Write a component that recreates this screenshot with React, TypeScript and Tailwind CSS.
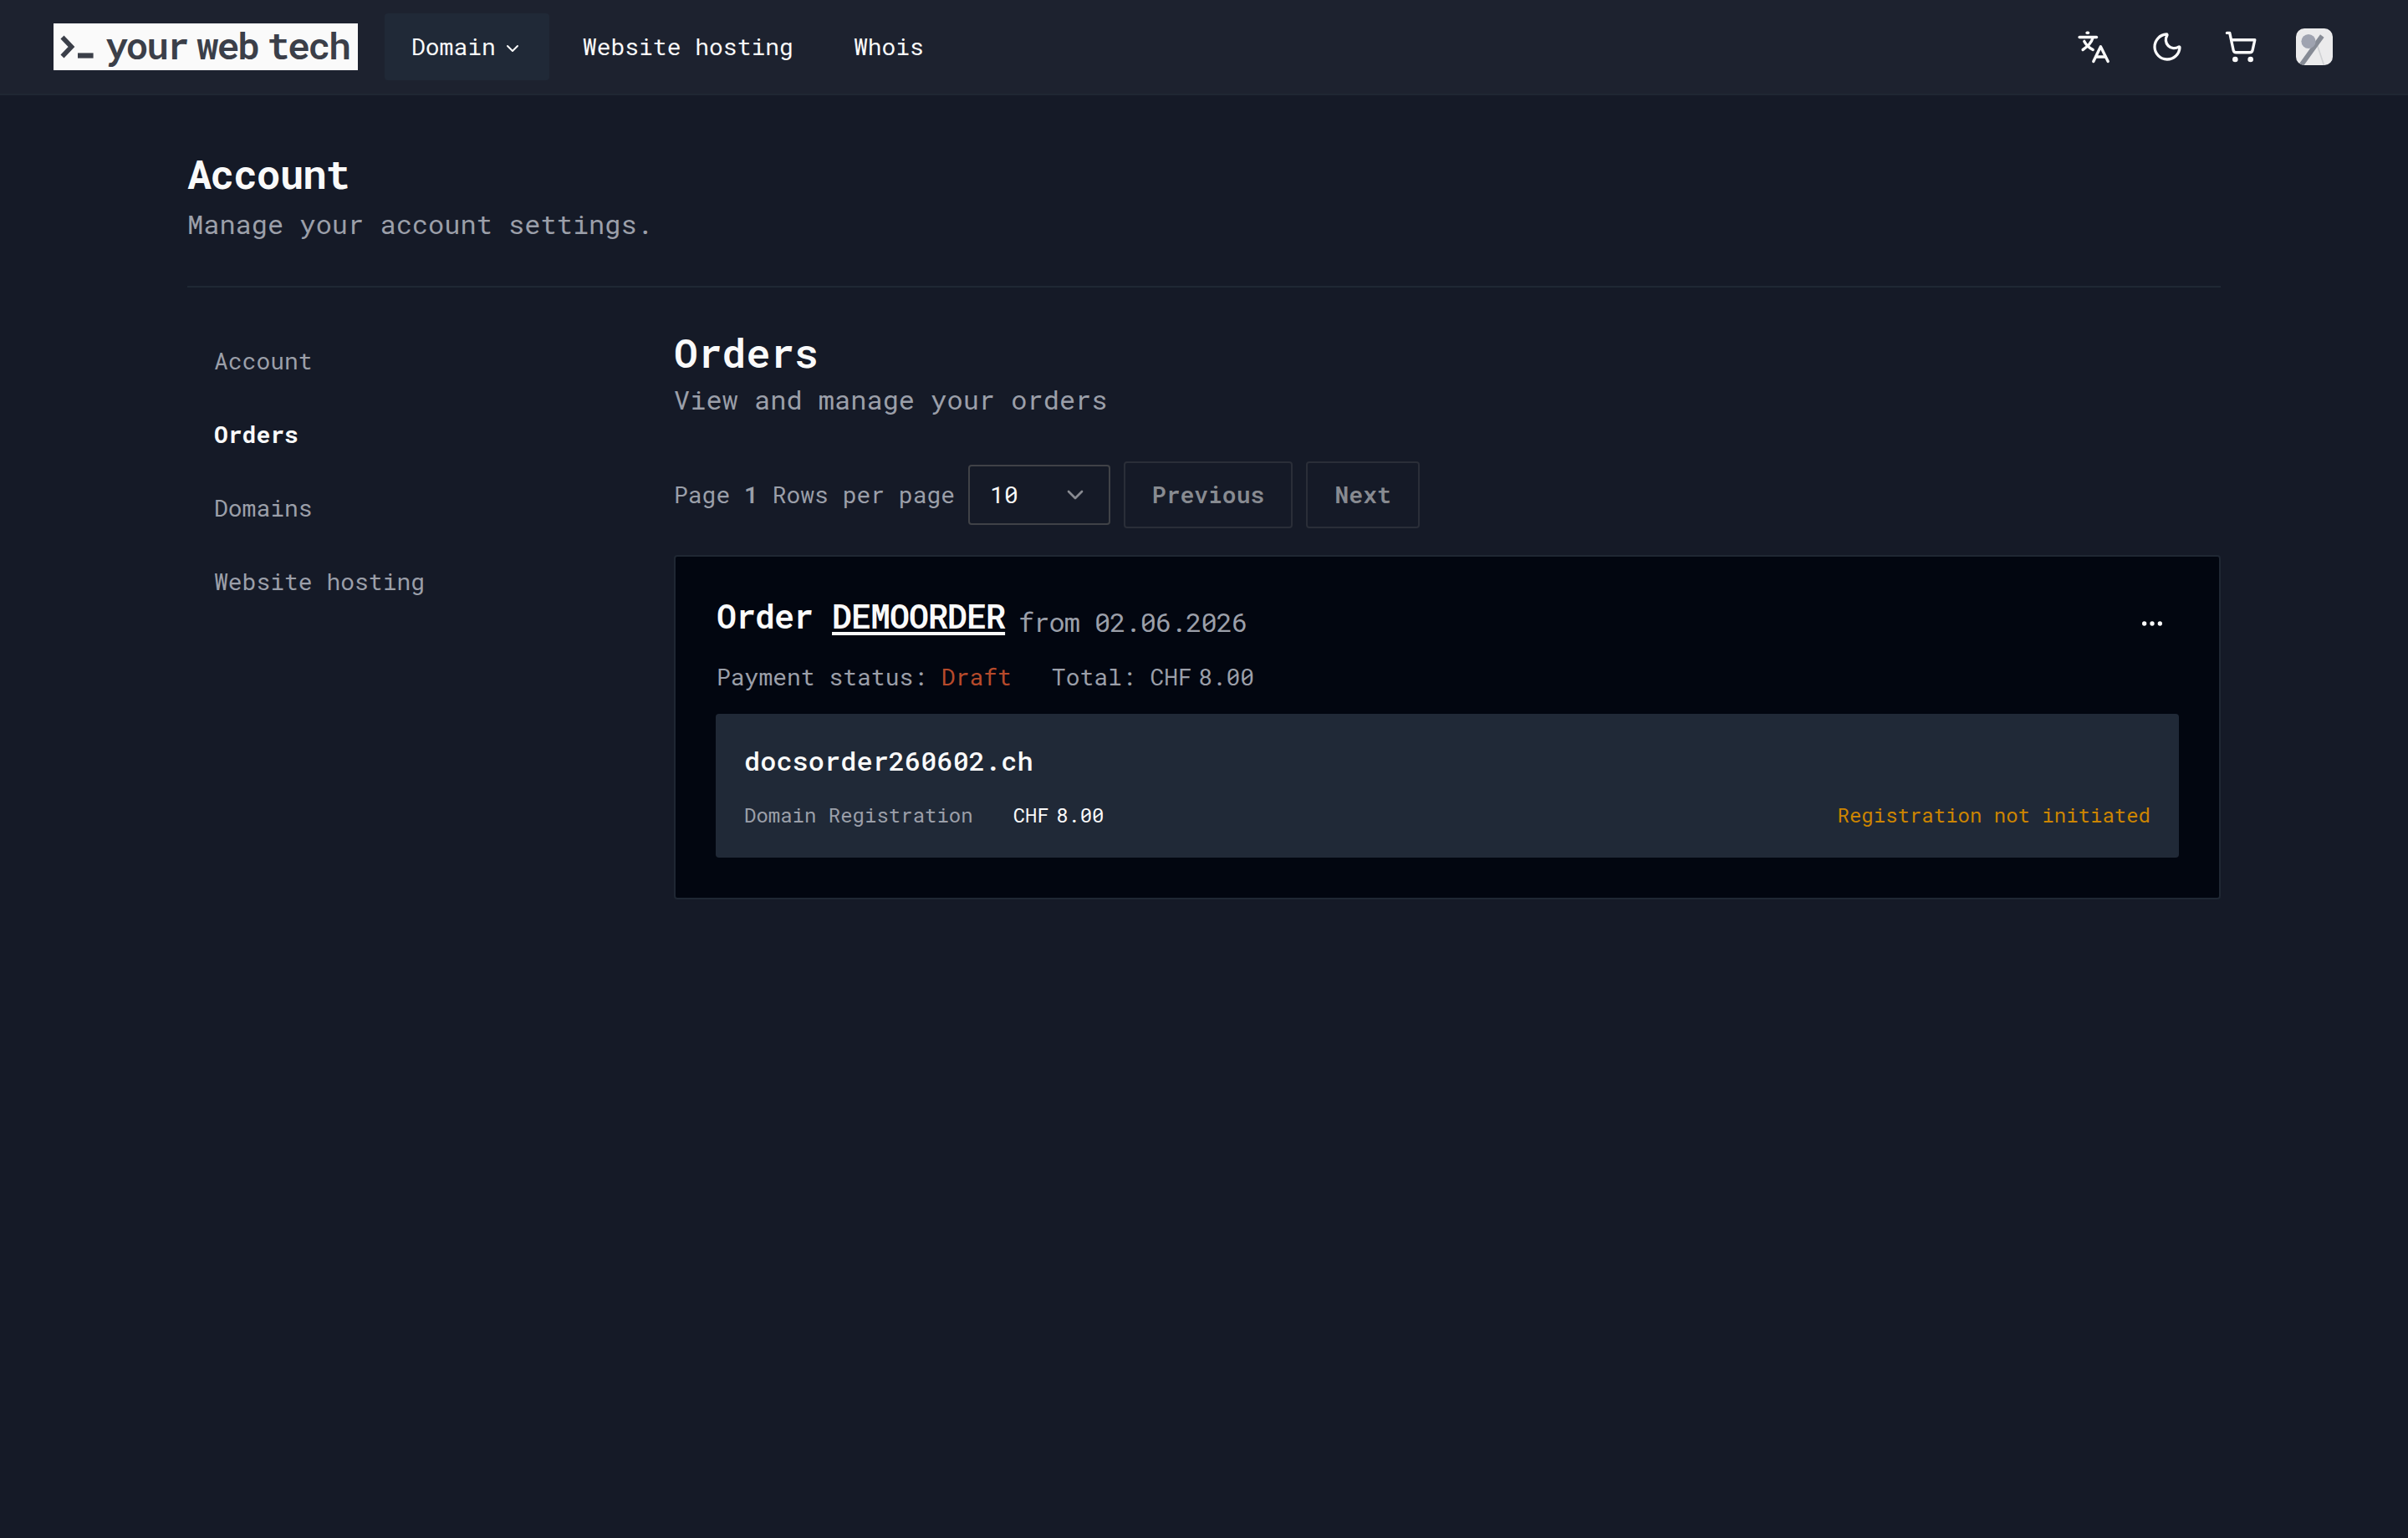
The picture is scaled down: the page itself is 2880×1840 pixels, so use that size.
import { ChevronDown, Ellipsis, Moon, ShoppingCart } from "lucide-react";

const sidebarItems = [
  { label: "Account", active: false },
  { label: "Orders", active: true },
  { label: "Domains", active: false },
  { label: "Website hosting", active: false },
];

function Logo() {
  return (
    <div className="flex h-14 w-[364px] items-center bg-[#fafafa] pl-2 text-[#3b3f49]">
      <svg viewBox="0 0 42 32" className="h-8 w-[42px]" fill="none" stroke="currentColor">
        <path d="M2.5 4.5 L13.5 16 L2.5 27.5" strokeWidth="5.6" />
        <path d="M21 26.5 H39.6" strokeWidth="6.2" />
      </svg>
      <div className="ml-3 flex gap-[11px] pb-[5px] text-[45px] leading-[51px] font-semibold tracking-[-2.5px]">
        <span>your</span>
        <span>web</span>
        <span>tech</span>
      </div>
    </div>
  );
}

function TranslateIcon() {
  return (
    <svg
      viewBox="0 0 40 40"
      className="size-10"
      fill="none"
      stroke="currentColor"
      strokeWidth="3.4"
      strokeLinecap="round"
      strokeLinejoin="round"
    >
      <path d="M12.1 3.2h1.4" />
      <path d="M3.1 8.5h20.4" />
      <path d="M19.2 8.9c-1.6 5.6-6.3 10.8-12.1 14.6" />
      <path d="M8.8 13.4c2.2 4.3 6.2 7.9 10.4 10.1" />
      <path d="M19.8 37.6 28.4 19.8 37.2 37.6" />
      <path d="M23 32h11" />
    </svg>
  );
}

function Avatar() {
  return (
    <div className="size-11 overflow-hidden rounded-[10px] bg-[#ebebec]">
      <svg viewBox="0 0 44 44" className="size-11">
        <path d="M25.5 20 L33.5 44" stroke="#d0d1d4" strokeWidth="1.6" />
        <path d="M31.3 9 L6.5 43.5" stroke="#868b95" strokeWidth="5.6" />
        <circle cx="15" cy="15.5" r="8.6" fill="#9fa3b0" />
      </svg>
    </div>
  );
}

function Header() {
  return (
    <header className="flex h-[114px] items-start justify-between border-b-2 border-[#1f2733] bg-[#1d222f] pt-4 pr-[90px] pl-16">
      <div className="flex h-20 items-center">
        <Logo />
        <nav className="ml-8 flex gap-2 font-[450]">
          <div className="flex h-20 items-center rounded bg-[#202937] px-8">
            Domain
            <ChevronDown className="relative top-0.5 ml-2 size-6" />
          </div>
          <div className="flex h-20 items-center px-8">Website hosting</div>
          <div className="flex h-20 items-center px-8">Whois</div>
        </nav>
      </div>
      <div className="flex h-20 items-center gap-12">
        <TranslateIcon />
        <Moon className="size-10" />
        <ShoppingCart className="size-10" />
        <div className="-ml-0.5">
          <Avatar />
        </div>
      </div>
    </header>
  );
}

function Pager() {
  return (
    <div className="mt-[50px] flex h-20 items-center gap-4">
      <p className="text-[#9b9fa9]">
        Page <span className="font-semibold">1</span> Rows per page
      </p>
      <div className="flex h-[72px] w-[170px] items-center justify-between rounded border-2 border-[#404247] px-6">
        10
        <ChevronDown className="size-8 opacity-50" />
      </div>
      <div className="flex h-20 w-[202px] items-center justify-center rounded border-2 border-[#2a2e38] font-semibold text-[#888b91]">
        Previous
      </div>
      <div className="flex h-20 w-[136px] items-center justify-center rounded border-2 border-[#2a2e38] font-semibold text-[#888b91]">
        Next
      </div>
    </div>
  );
}

function OrderCard() {
  return (
    <div className="mt-8 rounded border-2 border-[#1f2733] bg-[#020610] p-12">
      <div className="flex h-16 items-start justify-between">
        <div className="flex items-start gap-4 pl-px tracking-[-1px]">
          <h3 className="text-[40px] leading-[46px] font-semibold">
            Order{" "}
            <span className="underline decoration-4 underline-offset-[4px] [text-decoration-skip-ink:none]">
              DEMOORDER
            </span>
          </h3>
          <span className="text-[32px] leading-[60px] text-[#9b9fa9]">from 02.06.2026</span>
        </div>
        <div className="flex h-16 items-center pr-4">
          <Ellipsis className="size-8" />
        </div>
      </div>
      <div className="mt-3 flex gap-12 pl-px leading-10 text-[#9b9fa9]">
        <p>
          Payment status: <span className="text-[#b64a2b]">Draft</span>
        </p>
        <p>
          Total: CHF<span className="ml-[7px]">8.00</span>
        </p>
      </div>
      <div className="mt-6 rounded bg-[#202937] p-[34px]">
        <h4 className="text-[32px] leading-[44px] font-[550]">docsorder260602.ch</h4>
        <div className="mt-[26px] flex items-center justify-between text-2xl leading-[34px]">
          <div className="flex gap-12">
            <span className="text-[#9b9fa9]">Domain Registration</span>
            <span>
              CHF<span className="ml-2">8.00</span>
            </span>
          </div>
          <span className="text-[#cd8500]">Registration not initiated</span>
        </div>
      </div>
    </div>
  );
}

export default function App() {
  return (
    <div className="min-h-[1840px] w-[2880px] bg-[#151a27] font-['Roboto_Mono','Liberation_Mono',monospace] text-[28px] leading-10 whitespace-nowrap text-[#fafafa]">
      <Header />
      <main className="px-56 pt-[62px]">
        <h1 className="text-5xl leading-[64px] font-bold tracking-tight">Account</h1>
        <p className="mt-1 text-[32px] leading-[48px] text-[#9b9fa9]">Manage your account settings.</p>
        <div className="mt-[50px] h-0.5 bg-[#1f2834]" />
        <div className="mt-12 flex">
          <aside className="flex w-[582px] flex-col gap-2">
            {sidebarItems.map((item) => (
              <div
                key={item.label}
                className={
                  item.active
                    ? "flex h-20 items-center px-8 font-bold"
                    : "flex h-20 items-center px-8 text-[#9b9fa9]"
                }
              >
                {item.label}
              </div>
            ))}
          </aside>
          <section className="grow">
            <h2 className="text-5xl leading-[60px] font-semibold">Orders</h2>
            <p className="mt-0.5 text-[32px] leading-[48px] text-[#9b9fa9]">View and manage your orders</p>
            <Pager />
            <OrderCard />
          </section>
        </div>
      </main>
    </div>
  );
}
